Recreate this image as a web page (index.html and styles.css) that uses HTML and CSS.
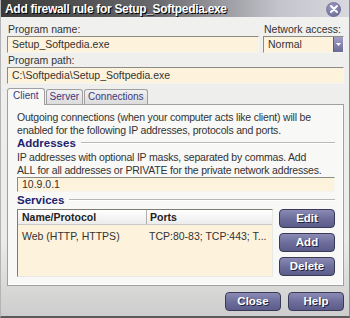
FILE: index.html
```html
<!DOCTYPE html>
<html lang="en">

<head>
  <meta charset="UTF-8">
  <title>Add firewall rule</title>
  <link rel="stylesheet" href="styles.css">
</head>

<body>

  <!-- dialog window -->
  <div class="window">

    <!-- title bar -->
    <div class="titlebar">
      <span class="title">Add firewall rule for Setup_Softpedia.exe</span>
      <span class="close-btn">
        <svg width="10" height="10" viewBox="0 0 10 10">
          <path d="M2 2 L8 8 M8 2 L2 8" stroke="#fff" stroke-width="2" stroke-linecap="round" />
        </svg>
      </span>
    </div>

    <div class="dialog">

      <!-- program name + access -->
      <div class="top-row">
        <div class="field field-grow">
          <div class="label">Program name:</div>
          <div class="input">Setup_Softpedia.exe</div>
        </div>
        <div class="field field-access">
          <div class="label">Network access:</div>
          <div class="select">
            <span class="select-value">Normal</span>
            <span class="select-arrow">
              <svg width="5" height="3" viewBox="0 0 5 3">
                <path d="M0 0 H5 L2.5 3 Z" fill="#fff" />
              </svg>
            </span>
          </div>
        </div>
      </div>

      <div class="field">
        <div class="label">Program path:</div>
        <div class="input">C:\Softpedia\Setup_Softpedia.exe</div>
      </div>

      <!-- tabs -->
      <div class="tabs">
        <span class="tab tab-active">Client</span>
        <span class="tab">Server</span>
        <span class="tab">Connections</span>
      </div>

      <div class="tab-panel">
        <p class="text">Outgoing connections (when your computer acts like client) will be<br>enabled for the following IP addresses, protocols and ports.</p>

        <div class="group-head"><span>Addresses</span></div>
        <p class="text text-ip">IP addresses with optional IP masks, separated by commas. Add<br>ALL for all addresses or PRIVATE for the private network addresses.</p>
        <div class="input input-ip">10.9.0.1</div>

        <div class="group-head"><span>Services</span></div>
        <div class="services">
          <div class="list">
            <div class="list-head">
              <span class="col-name">Name/Protocol</span>
              <span class="col-ports">Ports</span>
            </div>
            <div class="list-row">
              <span class="col-name">Web (HTTP, HTTPS)</span>
              <span class="col-ports">TCP:80-83; TCP:443; T...</span>
            </div>
          </div>
          <div class="side-buttons">
            <span class="btn">Edit</span>
            <span class="btn">Add</span>
            <span class="btn">Delete</span>
          </div>
        </div>
      </div>

      <!-- footer buttons -->
      <div class="footer">
        <span class="btn">Close</span>
        <span class="btn">Help</span>
      </div>
    </div>
  </div>

</body>

</html>
```

FILE: styles.css
```css
/* base */
body {
  margin: 0;
  padding: 0;
  font-family: "Liberation Sans", Arial, sans-serif;
  font-size: 10.5px;
  color: #333;
  background-color: #ececea;
}

.window {
  width: 350px;
  height: 318px;
  box-sizing: border-box;
  border-left: 1px solid #b4b4b4;
  border-right: 1px solid #8c8c8c;
  border-bottom: 2px solid #5a5a5a;
  display: flex;
  flex-direction: column;
}

/* title bar */
.titlebar {
  height: 17px;
  display: flex;
  align-items: center;
  justify-content: space-between;
  padding: 0 8px 0 4px;
  background: linear-gradient(to right, #3a3a3a 0%, #6a6a6e 45%, #c4c4cc 80%, #d8d8de 100%);
}

.title {
  color: #fff;
  font-weight: bold;
  font-size: 12px;
  letter-spacing: -0.3px;
  text-shadow: 1px 1px 0 #000;
}

.close-btn {
  width: 15px;
  height: 15px;
  margin-top: 1px;
  border-radius: 50%;
  background: radial-gradient(circle at 40% 35%, #9a9ac0, #5e5e8c);
  display: flex;
  align-items: center;
  justify-content: center;
}

/* dialog body */
.dialog {
  flex: 1;
  padding: 5px 5px 0 6px;
  background: linear-gradient(#f0f0ee 0%, #ebebe9 75%, #cdcdcd 100%);
}

.top-row {
  display: flex;
  gap: 4px;
}

.field-grow {
  flex: 1;
}

.field-access {
  width: 81px;
}

.label {
  height: 14px;
  line-height: 14px;
  padding-left: 1px;
  white-space: nowrap;
}

.input,
.select {
  height: 15px;
  line-height: 15px;
  padding-left: 4px;
  background-color: #fdf2dc;
  border-top: 1px solid #8c8c84;
  border-left: 1px solid #8c8c84;
  border-right: 1px solid #f4f4f0;
  border-bottom: 1px solid #f4f4f0;
  color: #333;
}

.select {
  display: flex;
  justify-content: space-between;
  padding-right: 0;
}

.select-arrow {
  width: 9px;
  display: flex;
  align-items: center;
  justify-content: center;
  background: linear-gradient(#a0a0c8, #6a6a98);
  border-left: 1px solid #5a5a80;
}

/* tabs */
.tabs {
  display: flex;
  margin-top: 4px;
  height: 16px;
  align-items: flex-end;
}

.tab {
  height: 14px;
  line-height: 14px;
  padding: 0 3px;
  margin-right: 1px;
  font-size: 10px;
  color: #3a3a80;
  background: linear-gradient(#f0f0f0, #dcdcdc);
  border: 1px solid #a0a0a0;
  border-bottom: none;
  border-radius: 3px 3px 0 0;
}

.tab-active {
  height: 16px;
  padding: 0 5px;
  background: #f8f8f6;
  position: relative;
  top: 1px;
}

.tab-panel {
  box-sizing: border-box;
  height: 182px;
  padding: 6px 8px 0 9px;
  background-color: #f8f8f6;
  border: 1px solid #a0a0a0;
  box-shadow: inset -1px -1px 0 #fff;
}

.text {
  margin: 0;
  line-height: 12.5px;
  letter-spacing: -0.2px;
  white-space: nowrap;
}

.text-ip {
  margin-top: 2px;
}

/* group headers with line */
.group-head {
  display: flex;
  align-items: center;
  gap: 5px;
  height: 13px;
  color: #23236e;
  font-weight: bold;
  font-size: 11.5px;
}

.group-head::after {
  content: "";
  flex: 1;
  border-top: 1px solid #b8b8b8;
  border-bottom: 1px solid #fff;
}

.input-ip {
  margin: 1px 0 1px 0;
  height: 13px;
  line-height: 13px;
}

/* services */
.services {
  display: flex;
  gap: 6px;
  margin-top: 3px;
}

.list {
  width: 255px;
  height: 66px;
  background-color: #fdf2dc;
  border-top: 1px solid #7c7c74;
  border-left: 1px solid #7c7c74;
  border-right: 1px solid #e8e8e4;
  border-bottom: 1px solid #e8e8e4;
}

.list-head,
.list-row {
  display: flex;
}

.list-head {
  height: 14px;
  line-height: 14px;
  background: linear-gradient(#ffffff, #ececec);
  border-bottom: 1px solid #c8c8c8;
  font-weight: bold;
  color: #222;
}

.list-head .col-name {
  border-right: 1px solid #b0b0b0;
}

.list-row {
  margin-top: 4px;
  height: 14px;
  line-height: 14px;
}

.col-name {
  width: 124px;
  padding-left: 4px;
}

.col-ports {
  padding-left: 3px;
  white-space: nowrap;
}

.side-buttons {
  display: flex;
  flex-direction: column;
  gap: 5px;
}

/* purple buttons */
.btn {
  width: 54px;
  height: 17px;
  line-height: 17px;
  text-align: center;
  color: #fff;
  font-weight: bold;
  font-size: 11.5px;
  text-shadow: 1px 1px 0 #22223a;
  background: linear-gradient(#8a8ab4, #6e6e9c 50%, #5c5c8a);
  border: 1px solid #3a3a58;
  border-radius: 4px;
}

.footer {
  display: flex;
  justify-content: flex-end;
  gap: 7px;
  margin-top: 6px;
}
```
